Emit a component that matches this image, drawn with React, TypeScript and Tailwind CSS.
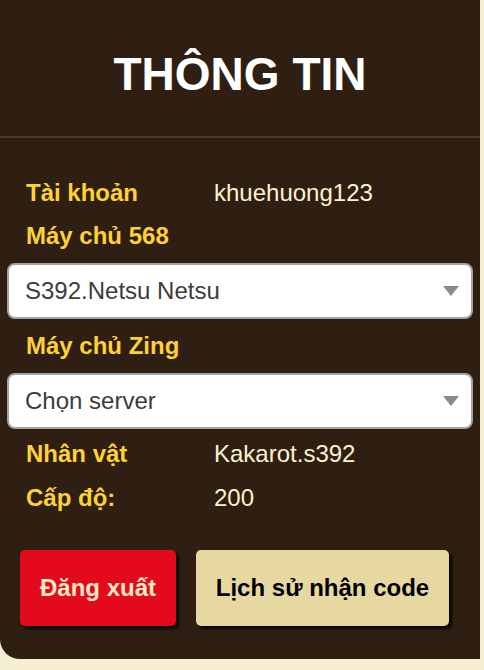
import React from "react";

function Row({ label, value, className = "" }: { label: string; value?: string; className?: string }) {
  return (
    <div className={`flex h-[30px] items-center pl-[26px] leading-[30px] text-[24px] ${className}`}>
      <span className="w-[188px] shrink-0 font-bold text-[#fdd232]">{label}</span>
      {value && <span className="text-[#fdf1cf]">{value}</span>}
    </div>
  );
}

function Select({ text, className = "" }: { text: string; className?: string }) {
  return (
    <div
      className={`ml-[7px] flex h-[56px] w-[466px] items-center justify-between rounded-[8px] border-2 border-[#a3a3a3] bg-white pl-[16px] pr-[12px] text-[24px] text-[#3c3c3c] ${className}`}
    >
      <span>{text}</span>
      <svg width="16" height="10" viewBox="0 0 16 10">
        <polygon points="0,0 16,0 8,10" fill="#8a8a8a" />
      </svg>
    </div>
  );
}

export default function App() {
  return (
    <div
      className="relative h-[670px] w-[484px] overflow-hidden bg-[#f7efd3]"
      style={{ fontFamily: '"Liberation Sans", Arial, sans-serif' }}
    >
      <div className="flex h-[659px] w-[480px] flex-col rounded-bl-[20px] bg-[#2f1f12]">
        <div className="flex h-[138px] shrink-0 items-center justify-center border-b-2 border-[#4b3a25] pt-[12px]">
          <h1 className="text-[46px] font-bold leading-none text-white">THÔNG TIN</h1>
        </div>
        <div className="flex flex-col pt-[40px]">
          <Row label="Tài khoản" value="khuehuong123" />
          <Row label="Máy chủ 568" className="mt-[13px]" />
          <Select text="S392.Netsu Netsu" className="mt-[12px]" />
          <Row label="Máy chủ Zing" className="mt-[12px]" />
          <Select text="Chọn server" className="mt-[12px]" />
          <Row label="Nhân vật" value="Kakarot.s392" className="mt-[10px]" />
          <Row label="Cấp độ:" value="200" className="mt-[14px]" />
          <div className="mt-[37px] flex gap-[20px] pl-[20px]">
            <button className="h-[76px] w-[156px] rounded-[5px] bg-[#e30b1b] text-[24px] font-bold text-[#fde9c4] shadow-[3px_3px_3px_rgba(0,0,0,0.85)]">
              Đăng xuất
            </button>
            <button className="h-[76px] w-[253px] rounded-[5px] bg-[#e7d8a2] text-[24px] font-bold text-black shadow-[3px_3px_3px_rgba(0,0,0,0.85)]">
              Lịch sử nhận code
            </button>
          </div>
        </div>
      </div>
    </div>
  );
}
